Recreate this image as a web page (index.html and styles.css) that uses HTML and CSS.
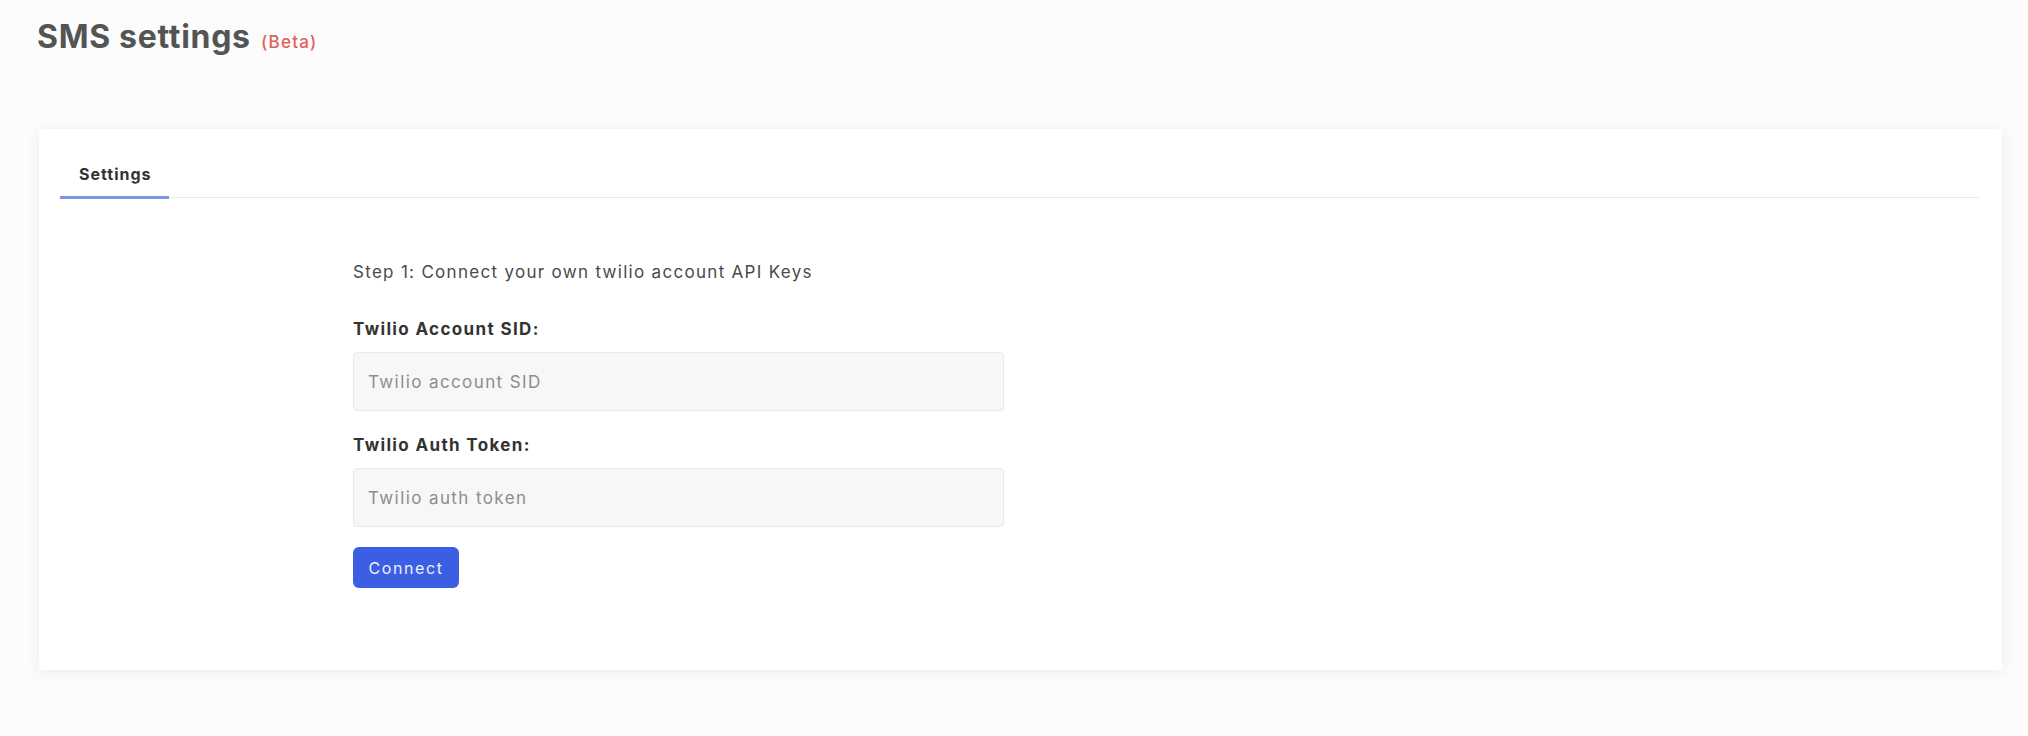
FILE: index.html
```html
<!DOCTYPE html>
<html lang="en">
<head>
<meta charset="utf-8">
<title>SMS settings</title>
<link rel="stylesheet" href="styles.css">
</head>
<body>
  <header class="page-header">
    <h1 class="page-title">SMS settings <span class="beta">(Beta)</span></h1>
  </header>
  <section class="card">
    <nav class="tabs">
      <div class="tab active">Settings</div>
    </nav>
    <div class="content">
      <p class="step">Step 1: Connect your own twilio account API Keys</p>
      <label class="field-label" for="sid">Twilio Account SID:</label>
      <input class="field-input" id="sid" type="text" placeholder="Twilio account SID">
      <label class="field-label second" for="token">Twilio Auth Token:</label>
      <input class="field-input" id="token" type="text" placeholder="Twilio auth token">
      <button class="btn-connect" type="button">Connect</button>
    </div>
  </section>
</body>
</html>
```

FILE: styles.css
```css
* { box-sizing: border-box; }
html, body { margin: 0; padding: 0; }
body {
  background: #fcfcfc;
  font-family: Inter, "Open Sans", "Liberation Sans", sans-serif;
  color: #444;
  width: 2028px;
  height: 736px;
  overflow: hidden;
}
.page-header {
  padding: 17px 0 0 37px;
  height: 129px;
}
.page-title {
  margin: 0;
  font-size: 32px;
  line-height: 40px;
  font-weight: 700;
  color: #545454;
  letter-spacing: 0.7px;
}
.beta {
  font-size: 17px;
  font-weight: 500;
  color: #e0605b;
  letter-spacing: 1.2px;
  margin-left: 2px;
}
.card {
  margin-left: 39px;
  width: 1963px;
  height: 541px;
  background: #ffffff;
  box-shadow: 0 2px 14px rgba(0, 0, 0, 0.07);
  padding: 20px 23px 0 21px;
}
.tabs {
  display: flex;
  border-bottom: 1px solid #e7e8ee;
}
.tab {
  padding: 15px 17px 12px 19px;
  margin-bottom: -2px;
  font-size: 16px;
  line-height: 20px;
  font-weight: 700;
  color: #333;
  letter-spacing: 1px;
  border-bottom: 3px solid #7f96e6;
}
.content {
  display: flex;
  flex-direction: column;
  align-items: flex-start;
  padding: 63px 0 0 293px;
}
.step {
  margin: 0;
  font-size: 17px;
  line-height: 22px;
  color: #4a4a4a;
  letter-spacing: 1.3px;
}
.field-label {
  margin-top: 35px;
  font-size: 17px;
  line-height: 22px;
  font-weight: 700;
  color: #333;
  letter-spacing: 1.35px;
}
.field-label.second { margin-top: 23px; }
.field-input {
  margin-top: 12px;
  width: 651px;
  height: 59px;
  background: #f7f7f7;
  border: 1px solid #e8e8e8;
  border-radius: 4px;
  padding: 0 14px;
  font-family: inherit;
  font-size: 17px;
  letter-spacing: 1.4px;
  color: #333;
  outline: none;
}
.field-input::placeholder { color: #8d8d8d; }
.btn-connect {
  margin-top: 20px;
  width: 106px;
  height: 41px;
  border: none;
  border-radius: 6px;
  background: #3b5ee2;
  color: #eef1ff;
  font-family: inherit;
  font-size: 16px;
  letter-spacing: 1.6px;
  padding: 0;
  cursor: pointer;
}
```
